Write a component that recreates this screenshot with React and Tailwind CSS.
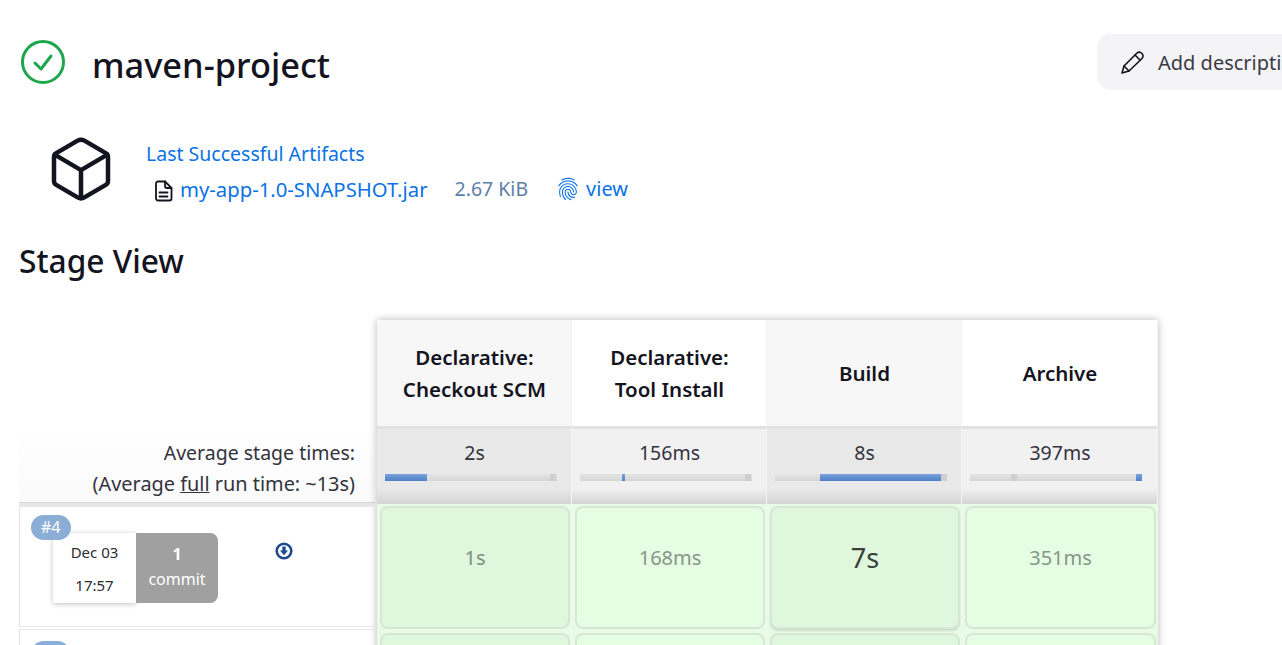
import React from "react";
import { IoCubeOutline, IoFingerPrintOutline } from "react-icons/io5";

const stages = [
  { name: ["Declarative:", "Checkout SCM"], avg: "2s", head: "bg-[#f7f7f7]", avgBg: "from-[#e9e9e9]", blue: [0, 42], tick: 165 },
  { name: ["Declarative:", "Tool Install"], avg: "156ms", head: "bg-white", avgBg: "from-[#f1f1f1]", blue: [42, 3], tick: 165 },
  { name: ["Build"], avg: "8s", head: "bg-[#f7f7f7]", avgBg: "from-[#e9e9e9]", blue: [45, 121], tick: 166 },
  { name: ["Archive"], avg: "397ms", head: "bg-white", avgBg: "from-[#f1f1f1]", blue: [166, 6], tick: 41 },
];

const cells = [
  { t: "1s", c: "bg-[#dff7dd] text-[#7f8d7f] text-[20px]" },
  { t: "168ms", c: "bg-[#e5fde3] text-[#869686] text-[20px]" },
  { t: "7s", c: "bg-[#dff7dd] text-[#3a403c] text-[27px] shadow-[0_2px_2px_rgba(0,0,0,0.12)]" },
  { t: "351ms", c: "bg-[#e5fde3] text-[#869686] text-[20px]" },
];

function Bar({ blue, tick }) {
  return (
    <div className="relative mx-2 h-[7px] w-[172px] bg-gradient-to-b from-[#e4e4e4] to-[#d6d6d6]">
      <div className="absolute top-0 h-[7px] w-[6px] bg-[#cfcfcf]" style={{ left: tick }} />
      <div
        className="absolute top-0 h-[7px] bg-gradient-to-b from-[#7ba3dc] to-[#4f80cc]"
        style={{ left: blue[0], width: blue[1] }}
      />
    </div>
  );
}

export default function App() {
  return (
    <div className="h-[645px] w-[1282px] overflow-hidden bg-white font-['Noto_Sans',sans-serif] text-[#14141f]">
      <div className="flex h-[90px] items-start pt-[34px]">
        <div className="ml-[19px] mt-[4px] flex w-[73px] shrink-0">
          <svg width="48" height="48" viewBox="0 0 48 48" fill="none" stroke="#1ea64d" strokeWidth="3" strokeLinecap="round" strokeLinejoin="round">
            <circle cx="24" cy="24" r="20.5" />
            <path d="M16 25l6 6 10-13" />
          </svg>
        </div>
        <h1 className="mt-[3px] text-[34.4px] leading-[56px] font-medium whitespace-nowrap">maven-project</h1>
        <div className="ml-auto flex h-[56px] w-[185px] shrink-0 items-center overflow-hidden rounded-l-[14px] bg-[#f4f4f7] pl-[22px]">
          <svg width="25" height="25" viewBox="0 0 25 25" fill="none" stroke="#14141f" strokeWidth="1.6" strokeLinejoin="round" strokeLinecap="round" className="shrink-0">
            <path d="M3 23l2-7L18 3q2.5-2 5 .5q2 2.500 0 5L10 21z" />
            <path d="M5 16l5 5M16 5l5 5" />
          </svg>
          <span className="ml-[14px] pt-[1px] text-[20px] whitespace-nowrap text-[#3a3a45]">Add description</span>
        </div>
      </div>

      <div className="ml-[45px] mt-[53px] flex h-[70px]">
        <IoCubeOutline size={72} className="-mt-[10px] w-[72px] shrink-0 text-[#14141f]" />
        <div className="ml-[29px] -mt-[4px]">
          <div className="text-[19.5px] leading-[30px] text-[#0b72e6]">Last Successful Artifacts</div>
          <div className="mt-[5px] flex h-[30px] items-center whitespace-nowrap">
            <svg width="19" height="22" viewBox="0 0 19 22" fill="none" stroke="#14141f" strokeWidth="1.8" strokeLinejoin="round" strokeLinecap="round" className="ml-[8px] mt-[3px] shrink-0">
              <path d="M4 1.500h7l6.500 6.500v10.500a2 2 0 0 1-2 2H4a2 2 0 0 1-2-2v-15a2 2 0 0 1 2-2z" />
              <path d="M11 1.500v4.500a2 2 0 0 0 2 2h4.500" />
              <path d="M5.500 12.500h8M5.500 16.500h8" />
            </svg>
            <span className="ml-[7px] text-[20.3px] text-[#0b72e6]">my-app-1.0-SNAPSHOT.jar</span>
            <span className="ml-[27px] text-[19.5px] text-[#5e7fa8]">2.67 KiB</span>
            <IoFingerPrintOutline size={24} className="ml-[28px] shrink-0 text-[#0b72e6]" />
            <span className="ml-[6px] text-[20px] text-[#0b72e6]">view</span>
          </div>
        </div>
      </div>

      <h2 className="ml-[19px] mt-[26px] text-[31.7px] leading-[44px] font-medium">Stage View</h2>

      <div className="ml-[19px] mt-[37px] flex w-[1139px]">
        <div className="w-[356px] shrink-0">
          <div className="h-[106px]" />
          <div className="h-[77px] border-b border-[#d9d9d9] bg-gradient-to-b from-white to-[#fafafa] pr-[20px] pt-[11px] text-right text-[19.5px] leading-[31px] text-[#33333d]">
            <div>Average stage times:</div>
            <div className="text-[19.9px]">
              (Average <span className="underline">full</span> run time: ~13s)
            </div>
          </div>
          <div className="relative h-[124px] border border-t-4 border-[#e6e6e6]">
            <div className="absolute left-[11px] top-[8px] z-10 rounded-full bg-[#8aaed6] px-[10px] text-[16px] leading-[25px] text-white">#4</div>
            <div className="absolute left-[33px] top-[26px] flex h-[70px] w-[165px]">
              <div className="flex w-[83px] flex-col items-center bg-white pt-[3px] text-[15px] leading-[33px] text-[#2a2a33] shadow-[0_1px_5px_rgba(0,0,0,0.25)]">
                <span>Dec 03</span>
                <span>17:57</span>
              </div>
              <div className="flex w-[82px] flex-col items-center rounded-r-[8px] bg-[#a0a0a0] pt-[9px] text-white">
                <span className="text-[16px] leading-[24px] font-bold">1</span>
                <span className="text-[16px] leading-[26px]">commit</span>
              </div>
            </div>
            <svg width="18" height="18" viewBox="0 0 18 18" className="absolute left-[255px] top-[35px]">
              <circle cx="9" cy="9" r="7.300" fill="none" stroke="#1d4b8e" strokeWidth="2.600" />
              <path d="M7.300 4.500h3.400v4h2.400L9 13.200 4.900 8.500h2.400z" fill="#1d4b8e" />
            </svg>
          </div>
          <div className="relative mt-[2px] h-[40px] border border-[#e6e6e6]">
            <div className="absolute left-[11px] top-[11px] h-[25px] w-[39px] rounded-full bg-[#8aaed6]" />
          </div>
        </div>

        <div className="ml-[2px] flex w-[781px] shrink-0 shadow-[0_0_8px_rgba(0,0,0,0.28)]">
          {stages.map((s, i) => (
            <div key={i} className="w-[195px] shrink-0 bg-[#e8fbe6] [&:last-child]:w-[196px]">
              <div className={`flex h-[106px] flex-col items-center justify-center border-r border-[#f2f2f4] pl-[1px] text-[20.5px] leading-[32px] font-semibold ${s.head}`}>
                {s.name.map((n) => (
                  <span key={n}>{n}</span>
                ))}
              </div>
              <div className={`h-[78px] border-t-[3px] border-r border-t-[#e2e2e2] border-r-[#f4f4f4] bg-gradient-to-b via-[80%] to-[#d4d4d4] ${s.avgBg} ${i % 2 ? "via-[#f1f1f1]" : "via-[#e9e9e9]"}`}>
                <div className="h-[45px] pl-[1px] pt-[8px] text-center text-[19.5px] leading-[32px] text-[#33333d]">{s.avg}</div>
                <Bar blue={s.blue} tick={s.tick} />
              </div>
              <div className="pl-[3px] pr-[2px] pt-[2px]">
                <div className={`flex h-[123px] items-center justify-center rounded-[8px] border-2 border-[#d8e6d6] pb-[19px] ${cells[i].c}`}>{cells[i].t}</div>
                <div className={`mt-[4px] h-[40px] rounded-t-[8px] border-2 border-[#d8e6d6] ${i % 2 ? "bg-[#e5fde3]" : "bg-[#dff7dd]"}`} />
              </div>
            </div>
          ))}
        </div>
      </div>
    </div>
  );
}
